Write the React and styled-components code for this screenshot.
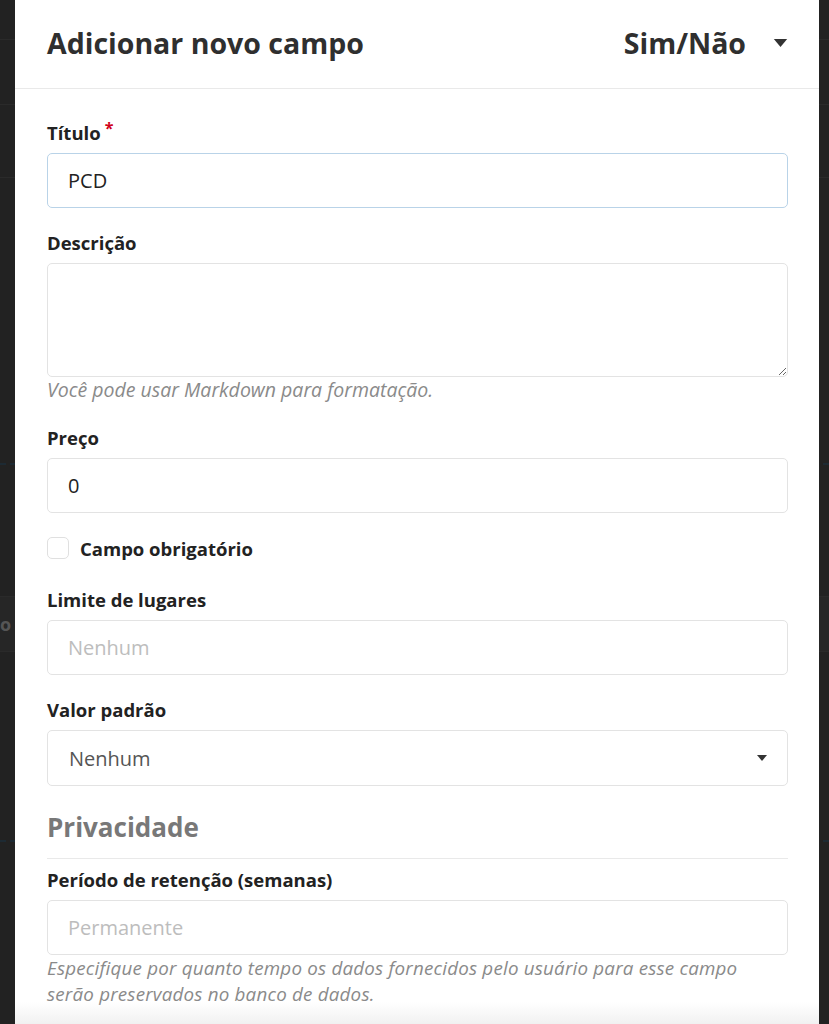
import React from "react";
import styled, { createGlobalStyle } from "styled-components";

const GlobalStyle = createGlobalStyle`
  html, body { margin: 0; padding: 0; background: #222; }
  body { font-family: "Open Sans", "Noto Sans", Arial, sans-serif; color: #2b2b2b; }
  * { box-sizing: border-box; }
`;

const Page = styled.div`
  position: relative;
  width: 829px;
  height: 1024px;
  overflow: hidden;
  background: #222;
`;

const Backdrop = styled.div`
  display: flex;
  flex-direction: column;
  width: 100%;
  height: 100%;
`;

const BackRow = styled.div`
  height: ${(p) => p.h}px;
  border-bottom: ${(p) => (p.dashed ? "2px dashed #1d2a33" : "1px solid #2a2a2a")};
  background: ${(p) => (p.light ? "#262626" : "transparent")};
  color: #555;
  font-weight: 700;
  font-size: 18px;
  display: flex;
  align-items: center;
`;

const Modal = styled.div`
  position: absolute;
  top: 0;
  left: 15px;
  width: 804px;
  height: 1024px;
  background: #fff;
  overflow: hidden;
  display: flex;
  flex-direction: column;
`;

const Header = styled.div`
  height: 89px;
  flex: none;
  display: flex;
  align-items: center;
  justify-content: space-between;
  padding: 0 31px 3px 32px;
  border-bottom: 1px solid #e9e9e9;
`;

const Title = styled.h2`
  margin: 0;
  font-size: 28.5px;
  line-height: 36px;
  font-weight: 700;
  color: #2f2f2f;
`;

const TypeToggle = styled.div`
  display: flex;
  align-items: center;
  gap: 27px;
  font-size: 28.5px;
  line-height: 36px;
  font-weight: 700;
  color: #2f2f2f;
`;

const Body = styled.div`
  padding: 32px 31px 0 32px;
  display: flex;
  flex-direction: column;
`;

const Field = styled.div`
  display: flex;
  flex-direction: column;
  margin-bottom: ${(p) => p.mb ?? 23}px;
`;

const Label = styled.label`
  display: block;
  font-size: 18.5px;
  line-height: 24px;
  font-weight: 700;
  color: #222;
  margin-bottom: 8px;
`;

const Required = styled.sup`
  color: #d0021b;
  font-size: 16px;
  margin-left: 4px;
  line-height: 0;
  position: relative;
  top: 1px;
`;

const Input = styled.input`
  width: 100%;
  height: 55px;
  border: 1px solid ${(p) => (p.focused ? "#b9d3e8" : "#e3e3e3")};
  border-radius: 5px;
  padding: 0 20px;
  font-family: inherit;
  font-size: 20px;
  color: #222;
  background: #fff;
  outline: none;
  &::placeholder { color: #bdbdbd; }
`;

const TextArea = styled.textarea`
  width: 100%;
  height: 114px;
  border: 1px solid #e3e3e3;
  border-radius: 5px;
  padding: 14px 20px;
  font-family: inherit;
  font-size: 20px;
  resize: vertical;
  outline: none;
  display: block;
`;

const Help = styled.div`
  font-size: ${(p) => p.size}px;
  line-height: 26px;
  font-style: italic;
  color: #8a8a8a;
  max-width: ${(p) => p.maxW ?? 741}px;
  letter-spacing: ${(p) => p.ls ?? 0}px;
`;

const CheckRow = styled.label`
  display: flex;
  align-items: center;
  gap: 11px;
  height: 24px;
  margin-bottom: 28px;
  font-size: 18.5px;
  font-weight: 700;
  color: #222;
`;

const Box = styled.span`
  width: 22px;
  height: 22px;
  border: 1px solid #e0e0e0;
  border-radius: 5px;
  background: #fff;
  flex: none;
`;

const Select = styled.div`
  height: 56px;
  border: 1px solid #e3e3e3;
  border-radius: 5px;
  padding: 0 20px 0 21px;
  display: flex;
  align-items: center;
  justify-content: space-between;
  font-size: 20px;
  color: #555;
`;

const SectionTitle = styled.h3`
  margin: 0;
  font-size: 26px;
  line-height: 32px;
  font-weight: 700;
  color: #787878;
  padding-bottom: 15px;
  border-bottom: 1px solid #e9e9e9;
  margin-bottom: 9px;
`;

const Fade = styled.div`
  position: absolute;
  left: 0;
  right: 0;
  bottom: 0;
  height: 22px;
  background: linear-gradient(to bottom, rgba(255,255,255,0), #f1f1f1);
`;

const Caret = ({ w, h }) => (
  <svg width={w} height={h} viewBox="0 0 10 6" aria-hidden="true">
    <path d="M0 0h10L5 6z" fill="#333" />
  </svg>
);

export default function App() {
  return (
    <>
      <GlobalStyle />
      <Page>
        <Backdrop>
          <BackRow h={40} />
          <BackRow h={65} />
          <BackRow h={73} />
          <BackRow h={287} dashed />
          <BackRow h={132} />
          <BackRow h={55} light>o</BackRow>
          <BackRow h={190} dashed />
        </Backdrop>
        <Modal>
          <Header>
            <Title>Adicionar novo campo</Title>
            <TypeToggle>
              Sim/Não
              <Caret w={15} h={8} />
            </TypeToggle>
          </Header>
          <Body>
            <Field>
              <Label>
                Título<Required>*</Required>
              </Label>
              <Input focused defaultValue="PCD" />
            </Field>
            <Field mb={23}>
              <Label>Descrição</Label>
              <TextArea />
              <Help size={19.5}>Você pode usar Markdown para formatação.</Help>
            </Field>
            <Field mb={23}>
              <Label>Preço</Label>
              <Input defaultValue="0" />
            </Field>
            <CheckRow>
              <Box />
              Campo obrigatório
            </CheckRow>
            <Field mb={23}>
              <Label>Limite de lugares</Label>
              <Input placeholder="Nenhum" />
            </Field>
            <Field mb={25}>
              <Label>Valor padrão</Label>
              <Select>
                Nenhum
                <Caret w={10} h={6} />
              </Select>
            </Field>
            <SectionTitle>Privacidade</SectionTitle>
            <Field>
              <Label>Período de retenção (semanas)</Label>
              <Input placeholder="Permanente" />
              <Help size={18.8} ls={0.2} maxW={720}>
                Especifique por quanto tempo os dados fornecidos pelo usuário para esse campo
                serão preservados no banco de dados.
              </Help>
            </Field>
          </Body>
          <Fade />
        </Modal>
      </Page>
    </>
  );
}
